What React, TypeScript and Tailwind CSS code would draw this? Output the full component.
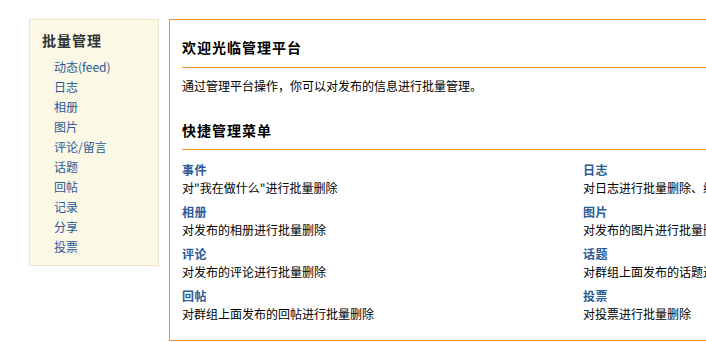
import React from "react";

const sideLinks = ["动态(feed)", "日志", "相册", "图片", "评论/留言", "话题", "回帖", "记录", "分享", "投票"];

const menuItems = [
  { title: "事件", desc: "对\"我在做什么\"进行批量删除" },
  { title: "日志", desc: "对日志进行批量删除、编辑分类及权限设置" },
  { title: "相册", desc: "对发布的相册进行批量删除" },
  { title: "图片", desc: "对发布的图片进行批量删除" },
  { title: "评论", desc: "对发布的评论进行批量删除" },
  { title: "话题", desc: "对群组上面发布的话题进行批量删除" },
  { title: "回帖", desc: "对群组上面发布的回帖进行批量删除" },
  { title: "投票", desc: "对投票进行批量删除" },
];

export default function App() {
  return (
    <div
      className="w-[706px] h-[342px] overflow-hidden bg-white text-black"
      style={{ fontFamily: '"Noto Sans CJK SC", "Liberation Sans", sans-serif' }}
    >
      <div className="flex items-start gap-[10px] pl-[29px] pt-[19px] w-[1100px]">
        {/* sidebar */}
        <div className="w-[130px] h-[247px] shrink-0 bg-[#fbf8e6] border border-[#ece4c4] pt-[8px]">
          <h2 className="pl-[12px] text-[14px] leading-[24px] font-bold tracking-[1px] text-[#333]">批量管理</h2>
          <ul className="pl-[24px] mt-[5px]">
            {sideLinks.map((l) => (
              <li key={l} className="text-[12px] leading-[20px] text-[#2c5a98]">
                {l}
              </li>
            ))}
          </ul>
        </div>

        {/* main */}
        <div className="w-[830px] h-[322px] shrink-0 border border-[#f5931f] px-[12px] pt-[16px]">
          <h1 className="text-[14px] leading-[22px] font-bold tracking-[1px]">欢迎光临管理平台</h1>
          <div className="mt-[9px] border-t border-[#f5931f]"></div>
          <p className="text-[12px] leading-[18px] mt-[9px]">通过管理平台操作，你可以对发布的信息进行批量管理。</p>
          <h1 className="text-[14px] leading-[22px] font-bold tracking-[1px] mt-[24px]">快捷管理菜单</h1>
          <div className="mt-[8px] border-t border-[#f5931f]"></div>
          <div className="grid grid-cols-2 w-[802px] mt-[11px] gap-y-[6px]">
            {menuItems.map((m) => (
              <div key={m.title}>
                <div className="text-[12px] leading-[18px] font-bold tracking-[0.5px] text-[#2c5a98]">{m.title}</div>
                <div className="text-[12px] leading-[18px]">{m.desc}</div>
              </div>
            ))}
          </div>
        </div>
      </div>
    </div>
  );
}
